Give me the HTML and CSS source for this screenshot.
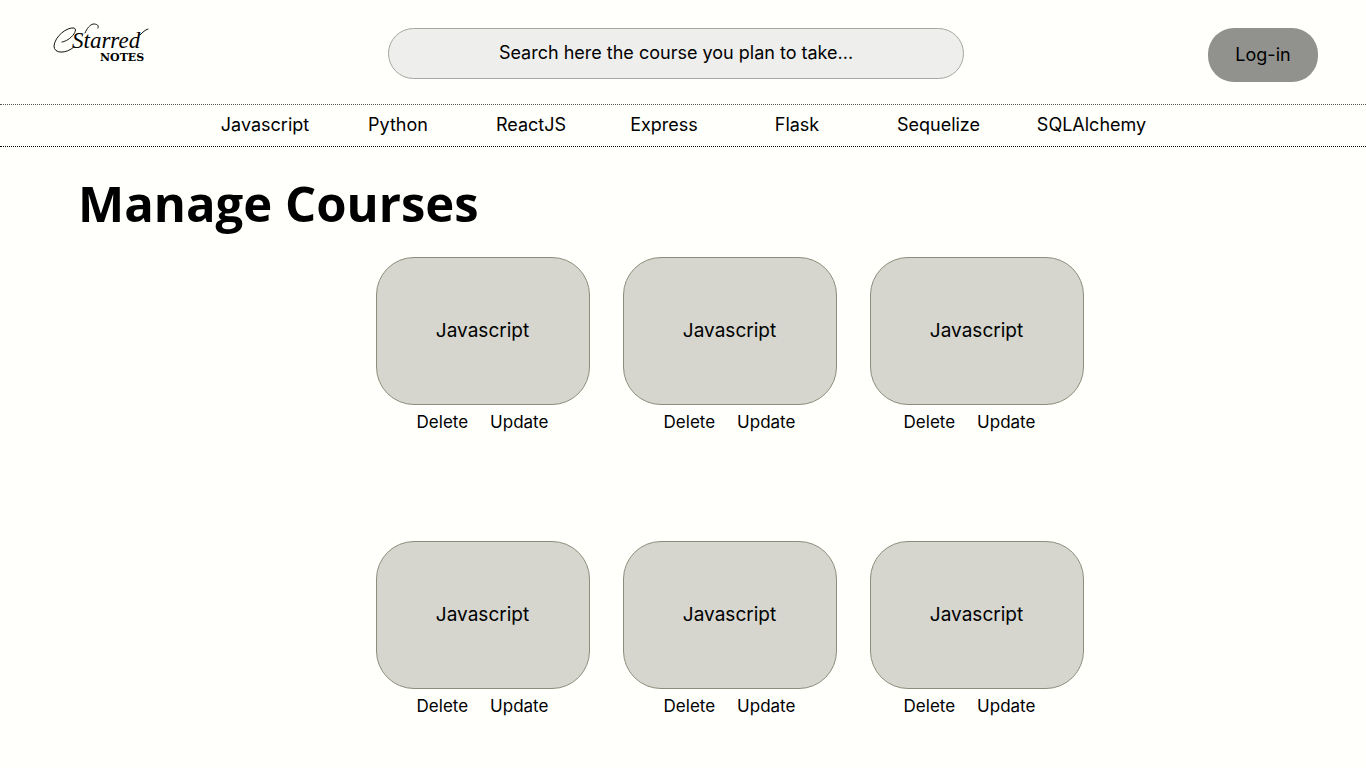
FILE: index.html
```html
<!DOCTYPE html>
<html lang="en">
<head>
<meta charset="utf-8">
<meta name="viewport" content="width=device-width, initial-scale=1">
<title>Starred Notes</title>
<link rel="stylesheet" href="styles.css">
</head>
<body>
<header class="header">
  <a class="logo" href="#" aria-label="Starred Notes">
    <svg width="104" height="44" viewBox="0 0 104 44">
      <path class="flourish" d="M24 27C16 34 4 34 4 26C5 16 17 7 24 8C29 10 20 21 12 22"/>
      <path class="flourish" d="M35 13C37 8 40 5 43 4C47 4 49 5 48 8"/>
      <path class="flourish" d="M90 15C93 12 95 10 98 9"/>
      <text class="logo-script" x="22" y="28">Starred</text>
      <text class="logo-notes" x="50" y="41">NOTES</text>
    </svg>
  </a>
  <form class="search" role="search">
    <input class="search-input" type="text" aria-label="Search courses" placeholder="Search here the course you plan to take...">
  </form>
  <button class="login" type="button">Log-in</button>
</header>
<nav class="nav" aria-label="Courses">
  <a href="#">Javascript</a>
  <a href="#">Python</a>
  <a href="#">ReactJS</a>
  <a href="#">Express</a>
  <a href="#">Flask</a>
  <a href="#">Sequelize</a>
  <a href="#">SQLAlchemy</a>
</nav>
<main class="main">
  <h1 class="title">Manage Courses</h1>
  <div class="courses">
    <article class="course">
      <a class="card" href="#">Javascript</a>
      <div class="actions"><button type="button">Delete</button><button type="button">Update</button></div>
    </article>
    <article class="course">
      <a class="card" href="#">Javascript</a>
      <div class="actions"><button type="button">Delete</button><button type="button">Update</button></div>
    </article>
    <article class="course">
      <a class="card" href="#">Javascript</a>
      <div class="actions actions-end"><button type="button">Delete</button><button type="button">Update</button></div>
    </article>
    <article class="course">
      <a class="card" href="#">Javascript</a>
      <div class="actions"><button type="button">Delete</button><button type="button">Update</button></div>
    </article>
    <article class="course">
      <a class="card" href="#">Javascript</a>
      <div class="actions"><button type="button">Delete</button><button type="button">Update</button></div>
    </article>
    <article class="course">
      <a class="card" href="#">Javascript</a>
      <div class="actions actions-end"><button type="button">Delete</button><button type="button">Update</button></div>
    </article>
  </div>
</main>
</body>
</html>
```
FILE: styles.css
```css
* {
  box-sizing: border-box;
}

body {
  margin: 0;
  background: #fffffb;
  color: #000;
  font-family: Inter, "Open Sans", sans-serif;
  font-size: 18px;
  line-height: 24px;
}

a {
  color: inherit;
  text-decoration: none;
}

button,
input {
  font: inherit;
  color: inherit;
}

.header {
  display: grid;
  grid-template-columns: 1fr minmax(0, 576px) 1fr;
  align-items: start;
  padding: 28px 48px 22px 34px;
}

.logo {
  display: block;
  height: 44px;
  margin-top: -8px;
  padding-left: 16px;
}

.logo svg {
  display: block;
}

.flourish {
  fill: none;
  stroke: #111;
  stroke-width: 1;
  stroke-linecap: round;
}

.logo-script {
  font: italic 23px "Liberation Serif", serif;
}

.logo-notes {
  font: bold 11px "DejaVu Serif", serif;
}

.search-input {
  display: block;
  width: 100%;
  height: 51px;
  padding: 0 26px 2px;
  border: 1px solid #a5a5a2;
  border-radius: 26px;
  background: #eeeeed;
  text-align: center;
}

.search-input::placeholder {
  color: #000;
  opacity: 1;
}

.login {
  justify-self: end;
  width: 110px;
  height: 54px;
  padding: 0;
  border: 0;
  border-radius: 26px;
  background: #91928d;
}

.nav {
  display: grid;
  grid-template-columns: repeat(5, 133px) 150px 156px;
  justify-content: center;
  padding: 8px 0 9px 2px;
  border-top: 1px dotted #555;
  border-bottom: 1px dotted #000;
  text-align: center;
}

.main {
  padding: 24px 0 32px;
}

.title {
  margin: 0;
  padding-left: 78px;
  font-family: "Open Sans", sans-serif;
  font-size: 49px;
  line-height: 64px;
  font-weight: 700;
}

.courses {
  display: grid;
  grid-template-columns: repeat(3, 214px);
  justify-content: center;
  gap: 107px 33px;
  padding: 22px 0 0 93px;
}

.card {
  display: flex;
  align-items: center;
  justify-content: center;
  height: 148px;
  border: 1px solid #8c8e7b;
  border-radius: 38px;
  background: #d6d6cf;
  font-size: 19px;
}

.actions {
  display: flex;
  justify-content: center;
  gap: 22px;
  padding-top: 5px;
  font-size: 17px;
}

.actions-end {
  padding-right: 14px;
}

.actions button {
  padding: 0;
  border: 0;
  background: none;
}
```
